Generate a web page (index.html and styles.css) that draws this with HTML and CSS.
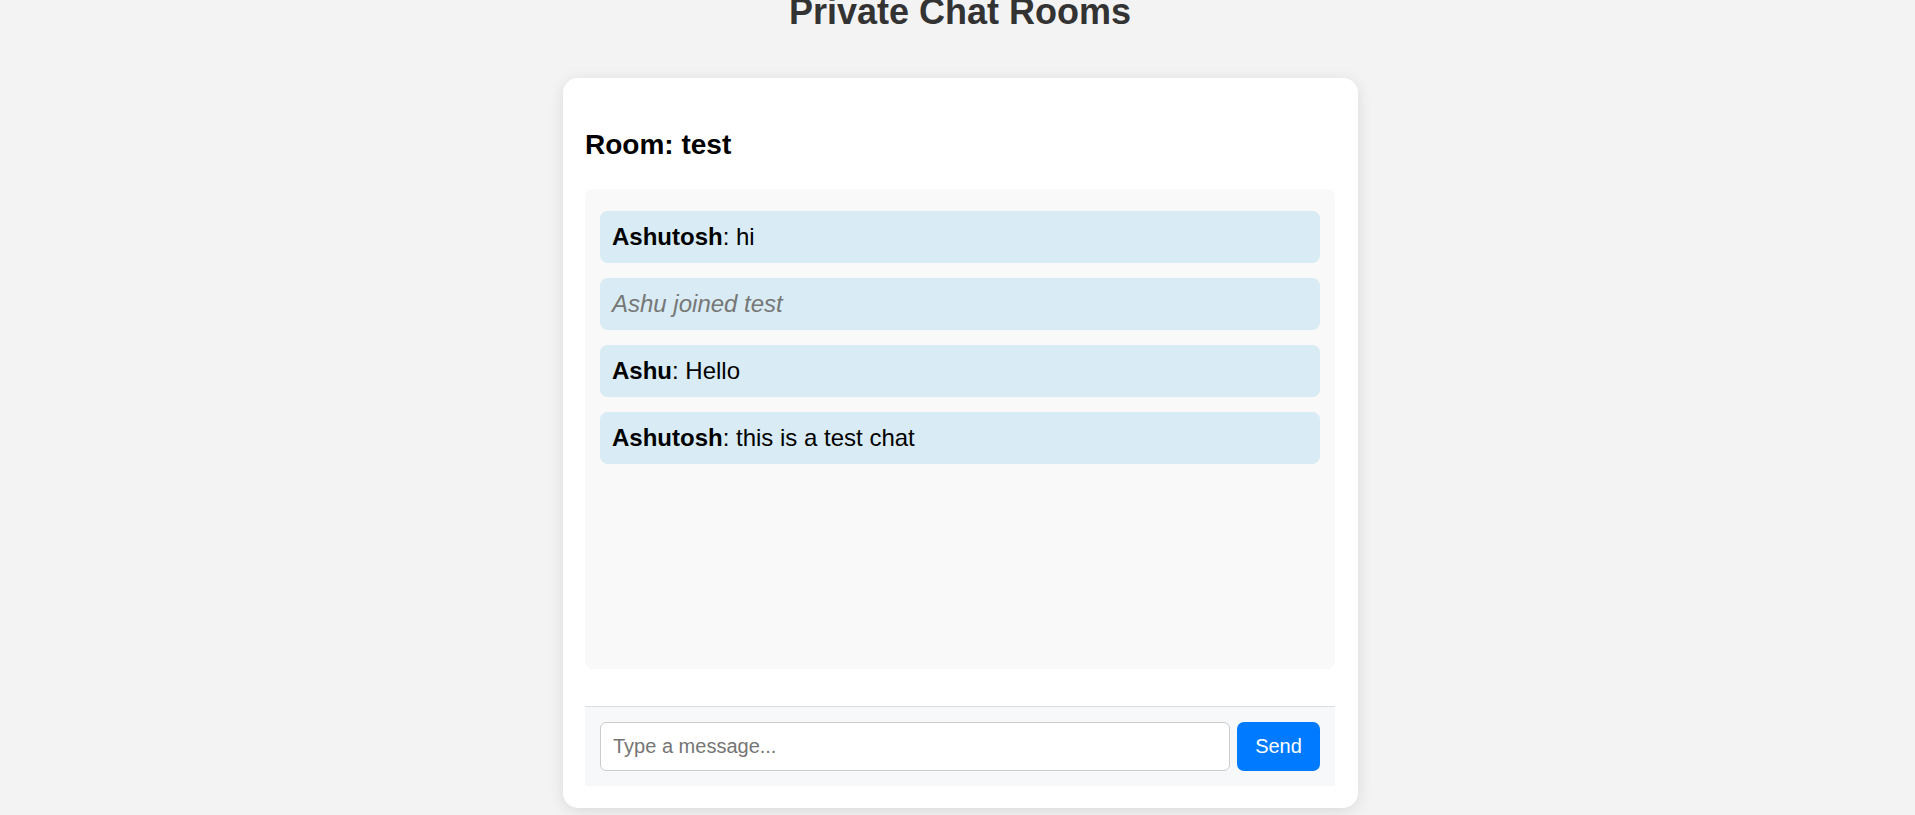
FILE: index.html
```html
<!DOCTYPE html>
<html lang="en">
<head>
<meta charset="utf-8">
<title>Private Chat Rooms</title>
<link rel="stylesheet" href="styles.css">
</head>
<body>
  <h2 class="page-title">Private Chat Rooms</h2>
  <div class="card">
    <h3 class="room-title">Room: test</h3>
    <div class="messages">
      <div class="message"><strong>Ashutosh</strong>: hi</div>
      <div class="message system">Ashu joined test</div>
      <div class="message"><strong>Ashu</strong>: Hello</div>
      <div class="message"><strong>Ashutosh</strong>: this is a test chat</div>
    </div>
    <div class="composer">
      <input class="composer-input" type="text" placeholder="Type a message...">
      <button class="send-btn" type="button">Send</button>
    </div>
  </div>
</body>
</html>
```

FILE: styles.css
```css
* {
  box-sizing: border-box;
}

html, body {
  margin: 0;
  height: 100%;
  overflow: hidden;
}

body {
  background: #f3f3f3;
  font-family: "Liberation Sans", Arial, sans-serif;
  padding-left: 5px;
}

.page-title {
  font-size: 36px;
  line-height: 41px;
  font-weight: bold;
  color: #333333;
  text-align: center;
  margin: -9px 0 45.7px;
}

.card {
  width: 795px;
  margin: 0 auto;
  background: #ffffff;
  border-radius: 15px;
  padding: 23.5px 22.5px 22.5px;
  box-shadow: 0 3px 15px rgba(0, 0, 0, 0.1);
}

.room-title {
  font-size: 28px;
  font-weight: bold;
  color: #000000;
  margin: 28px 0;
}

.messages {
  height: 480px;
  background: #f9f9f9;
  border-radius: 7.5px;
  padding: 21.5px 15px 15px;
  display: flex;
  flex-direction: column;
  gap: 15px;
}

.message {
  background: #d9ecf5;
  border-radius: 7.5px;
  padding: 12px;
  font-size: 24px;
  color: #000000;
}

.message strong {
  font-weight: bold;
}

.message.system {
  font-style: italic;
  color: #777777;
}

.composer {
  margin-top: 37.3px;
  border-top: 1px solid #dcdde0;
  background: #f7f8fa;
  padding: 15px;
  display: flex;
  gap: 7.5px;
}

.composer-input {
  flex: 1;
  height: 48.5px;
  border: 1.5px solid #cccccc;
  border-radius: 6px;
  padding: 0 12px;
  font-family: "Liberation Sans", Arial, sans-serif;
  font-size: 20px;
  background: #ffffff;
  color: #000000;
  outline: none;
}

.composer-input::placeholder {
  color: #757575;
}

.send-btn {
  width: 83px;
  height: 48.5px;
  border: none;
  border-radius: 7px;
  background: #007bff;
  color: #ffffff;
  font-family: "Liberation Sans", Arial, sans-serif;
  font-size: 20px;
  padding: 0;
}
```
